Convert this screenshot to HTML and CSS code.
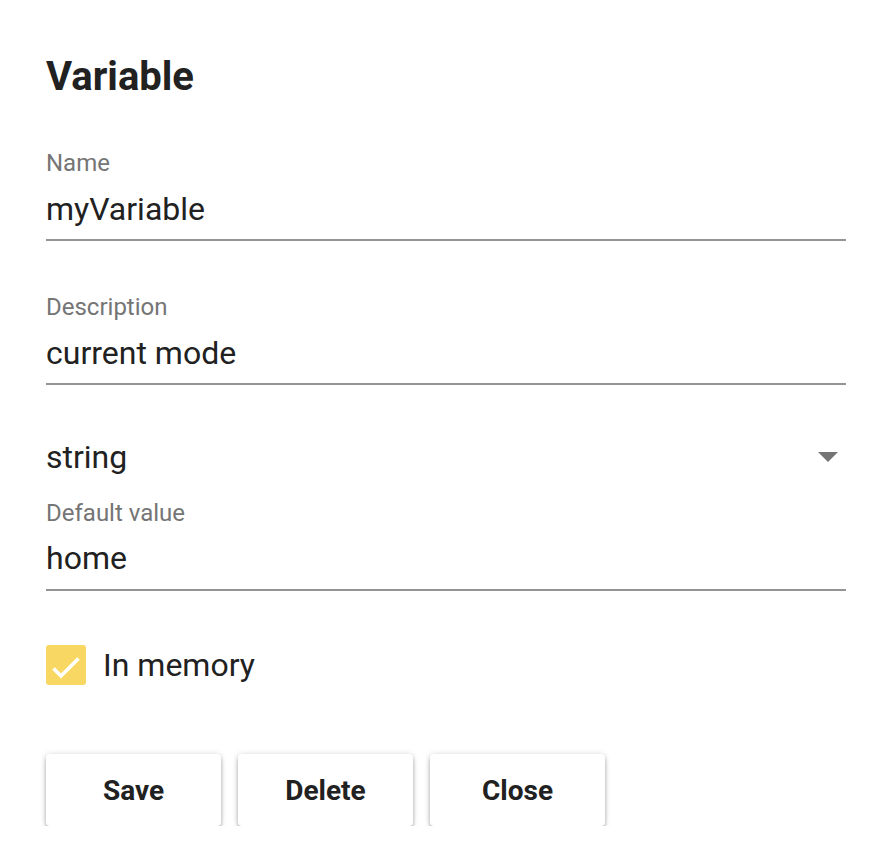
FILE: index.html
```html
<!DOCTYPE html>
<html>
<head>
<meta charset="utf-8">
<link rel="stylesheet" href="styles.css">
</head>
<body>
<div class="dialog">
  <h1 class="title">Variable</h1>
  <div class="field">
    <label class="label">Name</label>
    <div class="value">myVariable</div>
  </div>
  <div class="field">
    <label class="label">Description</label>
    <div class="value">current mode</div>
  </div>
  <div class="select">
    <span class="value">string</span>
    <span class="arrow"></span>
  </div>
  <div class="field field-tight">
    <label class="label">Default value</label>
    <div class="value">home</div>
  </div>
  <div class="check">
    <span class="box">
      <svg width="40" height="40" viewBox="0 0 40 40"><path d="M7.5 23.5 L15 31 L32.5 13.5" fill="none" stroke="#fff" stroke-width="3.6"/></svg>
    </span>
    <span class="check-label">In memory</span>
  </div>
  <div class="actions">
    <button class="btn">Save</button>
    <button class="btn">Delete</button>
    <button class="btn">Close</button>
  </div>
</div>
</body>
</html>
```
FILE: styles.css
```css
html, body { margin: 0; padding: 0; background: #fff; }
body { font-family: Roboto, "Noto Sans", sans-serif; color: #212121; }
.dialog { padding: 53px 48px 0 46px; }
.title { margin: 0; font-size: 40px; font-weight: 700; line-height: 48px; color: #212121; }
.field { margin-top: 48px; border-bottom: 2px solid #949494; }
.field + .field { margin-top: 52px; }
.field-tight { margin-top: 22px; }
.field-tight .value { padding-bottom: 11px; }
.label { display: block; font-size: 24px; line-height: 28px; color: #757575; margin-bottom: 12px; }
.field-tight .label { margin-bottom: 11px; }
.value { font-size: 32px; line-height: 40px; color: #212121; padding-bottom: 10px; }
.select { display: flex; align-items: center; justify-content: space-between; margin-top: 52px; }
.select .value { padding: 0; }
.arrow { width: 0; height: 0; border-left: 10px solid transparent; border-right: 10px solid transparent; border-top: 10px solid #757575; margin-right: 8px; }
.check { display: flex; align-items: center; margin-top: 54px; }
.box { width: 40px; height: 40px; background: #f8d862; border-radius: 3px; display: block; }
.box svg { display: block; }
.check-label { margin-left: 17px; font-size: 32px; line-height: 40px; color: #212121; }
.actions { display: flex; gap: 17px; margin-top: 69px; }
.btn { width: 175px; height: 72px; border: 0; padding: 0; background: #fff; border-radius: 4px; font-family: Roboto, sans-serif; font-weight: 700; font-size: 28px; color: #212121; box-shadow: 0 3px 4px rgba(0,0,0,0.28), 0 0 6px rgba(0,0,0,0.12); }
```
